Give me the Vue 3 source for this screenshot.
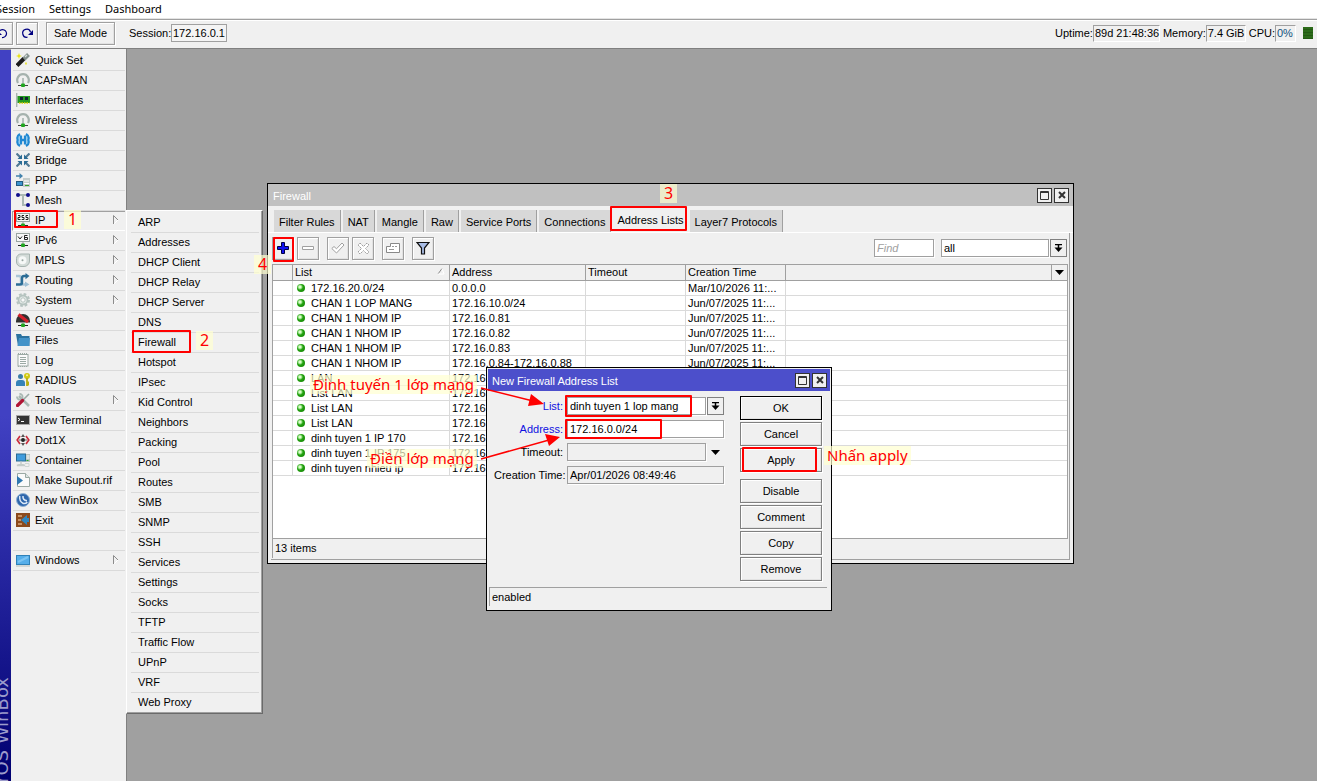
<script setup>
import { ref } from 'vue'

const antenna = '<path d="M2 10C-.2 6 2.500 1.200 7 1.200s7.200 4.800 5 8.800" fill="none" stroke="#a5b2ae" stroke-width="2.200"/><path d="M7 5V11" stroke="#b5c0bc" stroke-width="2"/><path d="M2 12.500h10" stroke="#444" stroke-width="1"/><rect x="5" y="10.500" width="4" height="3.500" rx="1" fill="#1fa51f"/>'
const plug = '<path d="M7 9v3" stroke="#999" stroke-width="1"/><path d="M2 12.500h10" stroke="#222" stroke-width="1"/><rect x="5" y="10.500" width="4" height="3.500" rx="1" fill="#1fa51f"/>'

const icons = {
  quick: '<path d="M1 12.500 8 5.500" stroke="#1c1c1c" stroke-width="4"/><path d="M8 6 12.500 1.500" stroke="#84918d" stroke-width="4"/><path d="M9 4l2-2" stroke="#d5dcda" stroke-width="1.200"/><path d="M3 0l.8 2.200L6 3l-2.200.8L3 6l-.8-2.200L0 3l2.200-.8z" fill="#e8e010"/><path d="M10 9.500v2" stroke="#e8e010" stroke-width="1.500"/>',
  antenna,
  card: '<path d="M.7 0v14" stroke="#a9b5b1" stroke-width="1.400"/><rect x="1.500" y="3" width="12.500" height="7" fill="#239a23"/><rect x="4" y="4" width="3" height="3" fill="#123"/><rect x="9" y="4" width="3" height="3" fill="#123"/><path d="M3 10h10.500" stroke="#e0d000" stroke-width="1.500" stroke-dasharray="1.500 1"/>',
  guard: '<path d="M4 1C1.500 2.500 1 5 1.800 7 1 9 1.500 11.500 4 13M5 2.500v9M10 1c2.500 1.500 3 4 2.200 6 .8 2 .3 4.500-2.200 6M9 2.500v9M4 7h6" fill="none" stroke="#2188d2" stroke-width="2.300"/><path d="M3 3v8M11 3v8" stroke="#55b4ee"/>',
  bridge: '<path d="M.5.500 4.500 4.500M13.500.500 9.500 4.500M.5 13.500l4-4M13.500 13.500l-4-4" stroke="#527a94" stroke-width="2.200"/><path d="M6 1.500V6H1.500zM8 1.500V6h4.500zM6 12.500V8H1.500zM8 12.500V8h4.500z" fill="#2b6c95"/>',
  ppp: '<path d="M0 2.200h3.500V0L7 3 3.500 6V3.800H0z" fill="#4382ac"/><rect x="7" y="5" width="7" height="9" fill="#c5ccca"/><rect x=".5" y="8.500" width="6" height="4" fill="#3d95d0" stroke="#245b80"/><path d="M8 8h5M8 10.500h5" stroke="#fff"/><path d="M9 12.500h4" stroke="#36a52c"/>',
  mesh: '<path d="M2 2h10M7 2v10h5" fill="none" stroke="#abb9b5" stroke-width="2"/><circle cx="2" cy="2" r="2" fill="#10108c"/><circle cx="12" cy="2" r="2" fill="#10108c"/><circle cx="12" cy="12" r="2" fill="#10108c"/>',
  ip: '<rect x=".5" y=".5" width="13" height="8" fill="#f7f7f7" stroke="#9aa5a1"/><path d="M2 2.500h2v2H2v2h2.500M8 2.500H6v2h2v2H5.700M12 2.500h-2v2h2v2H9.700" fill="none" stroke="#222"/>' + plug,
  ipv6: '<rect x=".5" y=".5" width="13" height="8" fill="#f7f7f7" stroke="#9aa5a1"/><path d="M2 3.500l2 2.500 2-2.500M11.500 2.500h-3v4h3v-2h-3" fill="none" stroke="#222"/>' + plug,
  mpls: '<path d="M5 1h8.500v7A5.500 5.500 0 0 1 8 13.500H5A4.500 4.500 0 0 1 .5 9V5.500A4.500 4.500 0 0 1 5 1z" fill="#d3dbd8" stroke="#a7b4b0"/><circle cx="6.500" cy="7.200" r="4" fill="#f6f8f7"/><circle cx="6.500" cy="7.200" r="1" fill="#98a5a1"/>',
  routing: '<path d="M0 3h3q2 0 2 2v4q0 2.500 2 2.500h2" fill="none" stroke="#a9c4d6" stroke-width="2.400"/><path d="M9 8.500 13.500 11.500 9 14z" fill="#9fc0d5"/><path d="M0 11.500h4q2 0 2-2v-4q0-2.500 2-2.500h2" fill="none" stroke="#2b6c95" stroke-width="2.400"/><path d="M9.500 0 13.500 3 9.500 6.200z" fill="#2b6c95"/>',
  gear: '<circle cx="7" cy="7" r="6" fill="none" stroke="#b5c3bf" stroke-width="2" stroke-dasharray="2.700 2"/><circle cx="7" cy="7" r="4.500" fill="#e6ebe9" stroke="#b5c3bf" stroke-width="1.800"/><circle cx="7" cy="7" r="2.200" fill="#fafafa" stroke="#b5c3bf"/>',
  queues: '<path d="M0 8a7 7 0 0 1 14 0v1.500H0z" fill="#303030"/><path d="M2.500 1.500 12 9" stroke="#d3202c" stroke-width="3.200"/>' + plug,
  files: '<path d="M0 1h5l1 2h7.500v10H2z" fill="#2a719f"/><path d="M3 5h11l-1 8H1.500z" fill="#4493c8"/>',
  log: '<rect x="2" y="1.500" width="10" height="11.500" fill="#fbfbfb" stroke="#9ba9a4"/><path d="M4 4.500h6M4 6.500h6M4 8.500h6M4 10.500h6" stroke="#9ba9a4"/><path d="M2 .500h10M2 13.500h10" stroke="#9ba9a4" stroke-dasharray="1 1"/>',
  radius: '<circle cx="4.500" cy="3.500" r="2.500" fill="#3c7ea8"/><path d="M0 13V10q0-3 3-3h3q3 0 3 3v3z" fill="#3583b8"/><circle cx="11" cy="3" r="3" fill="#cfc914"/><path d="M11 5v8M11 9.500h2M11 11.500h2" stroke="#b6ae12" stroke-width="1.800"/><circle cx="11" cy="2.200" r="1" fill="#f5f2a0"/>',
  tools: '<path d="M3 3l10 10" stroke="#aab9b4" stroke-width="2.500"/><path d="M1 3.500A2.800 2.800 0 1 0 3.500 1" fill="none" stroke="#aab9b4" stroke-width="1.800"/><path d="M13 1 7.500 6.500" stroke="#9aaaa5" stroke-width="1.600"/><path d="M6.500 7.500 1.500 12.500" stroke="#b01535" stroke-width="3.200" stroke-linecap="round"/>',
  terminal: '<rect x=".5" y="2.500" width="13" height="9" fill="#333" stroke="#a9a9a9"/><path d="M2 5l2 1.500L2 8M5 8.500h3" fill="none" stroke="#fff"/>',
  dot1x: '<path d="M4 3 1.200 7 4 11M10 3 12.800 7 10 11" fill="none" stroke="#c92d3c" stroke-width="1.700"/><path d="M7 1l2 3H5zM7 13l2-3H5z" fill="#555"/><circle cx="7" cy="7" r="2" fill="#222"/><path d="M3 7h2M9 7h2" stroke="#666"/>',
  container: '<rect x=".5" y="1" width="9" height="7" fill="#3f9bdc" stroke="#2b6c95"/><rect x="10" y="1" width="4" height="8" fill="#b7c2be"/><path d="M10.500 3h3M10.500 5h3" stroke="#fff"/><path d="M10.500 7.500h2" stroke="#2aa52a"/><path d="M5 8.500v3M1 12.500q4-2 8 0z" stroke="#c3ccc9" stroke-width="1.500" fill="#dfe5e3"/><path d="M9 10.500h4v3H9" fill="none" stroke="#cfd6d4"/>',
  supout: '<path d="M1.500.5h8l4 4v9h-12z" fill="#fafafa" stroke="#9ba9a4"/><path d="M9.500.5v4h4" fill="#dde5e2" stroke="#9ba9a4"/><path d="M1 3l6 4.500L1 12z" fill="#2e77b0"/>',
  winbox: '<circle cx="7" cy="7" r="6.500" fill="#2e66ac" stroke="#8fb0d4"/><path d="M3.800 3q-1 5 3.500 7.500 2.500.5 4-1.500M7 3q-.5 4 4 4.800" fill="none" stroke="#dce9f7" stroke-width="1.500"/>',
  exit: '<rect width="14" height="14" fill="#8c4a1c"/><path d="M2 3h4M2 7h3M2 11h4" stroke="#dca97c" stroke-width="1.500"/><path d="M5 7l6-5v3h2v4h-2v3z" fill="#2e86c0"/>',
  windows: '<rect x=".5" y="2.500" width="13" height="9" fill="#55aeea" stroke="#2f81b8"/><path d="M2 9l10-5" stroke="#7cc4f2" stroke-width="2"/><path d="M0 13h14" stroke="#b5bfbc"/>',
}

const mainMenu = [
  ['Quick Set', 'quick'], ['CAPsMAN', 'antenna'], ['Interfaces', 'card'], ['Wireless', 'antenna'],
  ['WireGuard', 'guard'], ['Bridge', 'bridge'], ['PPP', 'ppp'], ['Mesh', 'mesh'],
  ['IP', 'ip', true], ['IPv6', 'ipv6', true], ['MPLS', 'mpls', true], ['Routing', 'routing', true],
  ['System', 'gear', true], ['Queues', 'queues'], ['Files', 'files'], ['Log', 'log'],
  ['RADIUS', 'radius'], ['Tools', 'tools', true], ['New Terminal', 'terminal'], ['Dot1X', 'dot1x'],
  ['Container', 'container'], ['Make Supout.rif', 'supout'], ['New WinBox', 'winbox'], ['Exit', 'exit'],
  ['', ''], ['Windows', 'windows', true],
].map(([label, icon, sub]) => ({ label, icon, sub }))

const ipMenu = ['ARP', 'Addresses', 'DHCP Client', 'DHCP Relay', 'DHCP Server', 'DNS', 'Firewall', 'Hotspot',
  'IPsec', 'Kid Control', 'Neighbors', 'Packing', 'Pool', 'Routes', 'SMB', 'SNMP', 'SSH', 'Services',
  'Settings', 'Socks', 'TFTP', 'Traffic Flow', 'UPnP', 'VRF', 'Web Proxy']

const tabs = ['Filter Rules', 'NAT', 'Mangle', 'Raw', 'Service Ports', 'Connections', 'Address Lists', 'Layer7 Protocols']
const activeTab = ref('Address Lists')

const rows = [
  ['172.16.20.0/24', '0.0.0.0', 'Mar/10/2026 11:...'],
  ['CHAN 1 LOP MANG', '172.16.10.0/24', 'Jun/07/2025 11:...'],
  ['CHAN 1 NHOM IP', '172.16.0.81', 'Jun/07/2025 11:...'],
  ['CHAN 1 NHOM IP', '172.16.0.82', 'Jun/07/2025 11:...'],
  ['CHAN 1 NHOM IP', '172.16.0.83', 'Jun/07/2025 11:...'],
  ['CHAN 1 NHOM IP', '172.16.0.84-172.16.0.88', 'Jun/07/2025 11:...'],
  ['LAN', '172.16', ''],
  ['List LAN', '172.16', ''],
  ['List LAN', '172.16', ''],
  ['List LAN', '172.16', ''],
  ['dinh tuyen 1 IP 170', '172.16', ''],
  ['dinh tuyen 1 IP 175', '172.16', ''],
  ['dinh tuyen nhieu ip', '172.16', ''],
]

const filter = ref('all')
const find = ref('')
const listName = ref('dinh tuyen 1 lop mang')
const address = ref('172.16.0.0/24')
const timeout = ref('')
</script>

<template>
  <div class="app">
    <nav class="menubar">
      <button>Session</button>
      <button>Settings</button>
      <button>Dashboard</button>
    </nav>

    <header class="toolbar">
      <button class="btn sq" aria-label="Undo">
        <svg width="13" height="13" viewBox="0 0 13 13"><path d="M2.500 6.500A4 4 0 1 1 6 10.500" fill="none" stroke="#000080" stroke-width="1.200" /><path d="M1 3v5h5z" fill="#000080" /></svg>
      </button>
      <button class="btn sq" aria-label="Redo">
        <svg width="13" height="13" viewBox="0 0 13 13"><path d="M9.500 5A4 4 0 1 0 6.500 10.200" fill="none" stroke="#000080" stroke-width="1.200" /><path d="M12 3v5H7z" fill="#000080" /></svg>
      </button>
      <button class="btn safe">Safe Mode</button>
      <span class="session-label">Session:</span>
      <output class="boxed">172.16.0.1</output>
      <div class="stats">
        <span>Uptime:</span><output class="sunk up">89d 21:48:36</output>
        <span>Memory:</span><output class="sunk mem">7.4 GiB</output>
        <span>CPU:</span><output class="sunk cpu">0%</output>
        <i class="meter"></i>
      </div>
    </header>

    <main class="body">
      <div class="brand"><span>RouterOS WinBox</span></div>
      <nav class="side">
        <button v-for="(m, i) in mainMenu" :key="i" class="item" :class="{ open: m.label === 'IP' }" :disabled="!m.label">
          <svg v-if="m.icon" width="14" height="14" viewBox="0 0 14 14" v-html="icons[m.icon]"></svg>
          <span>{{ m.label }}</span>
          <svg v-if="m.sub" class="arrow" width="6" height="10" viewBox="0 0 6 10"><path d="M.5 9V.500L5 5" fill="none" stroke="#8c8c8c" /><path d="M5 5 1 9" stroke="#fff" /></svg>
        </button>
      </nav>

      <section class="canvas">
        <nav class="submenu">
          <button v-for="s in ipMenu" :key="s">{{ s }}</button>
        </nav>

        <section class="win firewall">
          <div class="title">
            <h2>Firewall</h2>
            <button class="cap" aria-label="Maximize"><svg width="9" height="9" viewBox="0 0 9 9"><path d="M.5.500h8v8h-8zM0 1.500h9" fill="none" stroke="#333" /></svg></button>
            <button class="cap" aria-label="Close"><svg width="8" height="8" viewBox="0 0 8 8"><path d="M1 1l6 6M7 1 1 7" stroke="#333" stroke-width="2" /></svg></button>
          </div>
          <div class="tabs">
            <button v-for="t in tabs" :key="t" :class="{ active: t === activeTab }" @click="activeTab = t">{{ t }}</button>
          </div>
          <div class="panel">
            <div class="tools">
              <button class="btn sq" aria-label="Add"><svg width="12" height="12" viewBox="0 0 12 12"><path d="M4.500.500h3v4h4v3h-4v4h-3v-4h-4v-3h4z" fill="#1010f0" stroke="#000040" /></svg></button>
              <button class="btn sq" aria-label="Remove"><svg width="14" height="6" viewBox="0 0 14 6"><path d="M1.500 1.500h11v3h-11z" fill="#fff" stroke="#a0a0a0" /></svg></button>
              <button class="btn sq gap" aria-label="Enable"><svg width="14" height="12" viewBox="0 0 14 12"><path d="M.8 6.500 3 4.500l2.500 2.300L11 1l2 2-7.500 8z" fill="#fff" stroke="#a0a0a0" /></svg></button>
              <button class="btn sq" aria-label="Disable"><svg width="13" height="13" viewBox="0 0 13 13"><path d="M3 1l3.500 3.500L10 1l2 2-3.500 3.500L12 10l-2 2-3.500-3.500L3 12l-2-2 3.500-3.500L1 3z" fill="#fff" stroke="#a0a0a0" stroke-dasharray="2 .7" /></svg></button>
              <button class="btn sq gap" aria-label="Comment"><svg width="14" height="12" viewBox="0 0 14 12"><path d="M4.500 1.500h9v9H.5v-6h4z" fill="#fff" stroke="#888" /><path d="M6 4.500h2M9 4.500h2M3 7.500h5" stroke="#999" /></svg></button>
              <button class="btn sq gap" aria-label="Filter"><svg width="14" height="14" viewBox="0 0 14 14"><path d="M1 1.500h12L8.500 7v6h-3V7z" fill="#a9bde6" stroke="#111" stroke-width="1.200" /></svg></button>
              <input v-model="find" class="field find" placeholder="Find" aria-label="Find">
              <div class="combo filter">
                <select v-model="filter" class="field" aria-label="Address list"><option>all</option></select>
                <span class="drop"><svg width="9" height="8" viewBox="0 0 9 8"><path d="M1 .500h7M4.500 1v4" stroke="#000" stroke-width="1.500" /><path d="M.5 3.500h8L4.500 8z" /></svg></span>
              </div>
            </div>
            <div class="grid">
              <table>
                <colgroup><col class="c0"><col class="c1"><col class="c2"><col class="c3"><col class="c3"><col><col class="c6"></colgroup>
                <thead>
                  <tr>
                    <th></th>
                    <th>List<svg class="sort" width="8" height="7" viewBox="0 0 8 7"><path d="M1 6 5 .500" stroke="#888" /><path d="M5 .500 7 6H1" fill="none" stroke="#fff" /></svg></th>
                    <th>Address</th><th>Timeout</th><th>Creation Time</th><th></th>
                    <th><button class="cols" aria-label="Columns"><svg width="9" height="5" viewBox="0 0 9 5"><path d="M0 0h9L4.500 5z" /></svg></button></th>
                  </tr>
                </thead>
                <tbody>
                  <tr v-for="(r, i) in rows" :key="i">
                    <td></td>
                    <td><i class="led"></i>{{ r[0] }}</td>
                    <td>{{ r[1] }}</td><td></td><td>{{ r[2] }}</td><td colspan="2"></td>
                  </tr>
                </tbody>
              </table>
            </div>
            <footer class="count">13 items</footer>
          </div>
        </section>

        <form class="win dialog" @submit.prevent>
          <div class="title">
            <h2>New Firewall Address List</h2>
            <button type="button" class="cap" aria-label="Maximize"><svg width="9" height="9" viewBox="0 0 9 9"><path d="M.5.500h8v8h-8zM0 1.500h9" fill="none" stroke="#333" /></svg></button>
            <button type="button" class="cap" aria-label="Close"><svg width="8" height="8" viewBox="0 0 8 8"><path d="M1 1l6 6M7 1 1 7" stroke="#333" stroke-width="2" /></svg></button>
          </div>
          <div class="content">
            <div class="fields">
              <label class="changed" for="f-list">List:</label>
              <div class="combo"><input id="f-list" v-model="listName" class="field"><button type="button" class="drop" aria-label="Choose list"><svg width="9" height="8" viewBox="0 0 9 8"><path d="M1 .500h7M4.500 1v4" stroke="#000" stroke-width="1.500" /><path d="M.5 3.500h8L4.500 8z" /></svg></button></div>
              <label class="changed" for="f-address">Address:</label>
              <input id="f-address" v-model="address" class="field">
              <label for="f-timeout">Timeout:</label>
              <div class="combo"><input id="f-timeout" v-model="timeout" class="field off"><button type="button" class="drop bare" aria-label="Set timeout"><svg width="9" height="5" viewBox="0 0 9 5"><path d="M0 0h9L4.500 5z" /></svg></button></div>
              <label for="f-created">Creation Time:</label>
              <input id="f-created" class="field off" value="Apr/01/2026 08:49:46" readonly>
            </div>
            <div class="actions">
              <button class="btn default">OK</button>
              <button type="button" class="btn">Cancel</button>
              <button type="button" class="btn">Apply</button>
              <button type="button" class="btn apart">Disable</button>
              <button type="button" class="btn">Comment</button>
              <button type="button" class="btn">Copy</button>
              <button type="button" class="btn">Remove</button>
            </div>
          </div>
          <footer class="state">enabled</footer>
        </form>
      </section>
    </main>

    <div class="marks">
      <i class="frame f-ip"></i>
      <i class="frame f-fw"></i>
      <i class="frame f-tab"></i>
      <i class="frame f-add"></i>
      <i class="frame f-name"></i>
      <i class="frame f-addr"></i>
      <i class="frame f-apply"></i>
      <span class="note num n1">1</span>
      <span class="note num n2">2</span>
      <span class="note num n3">3</span>
      <span class="note num n4">4</span>
      <span class="note n5">Định tuyến 1 lớp mạng</span>
      <span class="note n6">Điền lớp mạng</span>
      <span class="note n7">Nhấn apply</span>
      <svg class="lines" width="90" height="80" viewBox="0 0 90 80">
        <path d="M6 8 56 20.500M6 79 74 60" stroke="#f00" stroke-width="1.500" />
        <path d="M69 24 53 26 56 14zM85 57 74 66 70 54z" fill="#f00" />
      </svg>
    </div>
  </div>
</template>

<style>
body {
  margin: 0;
  background: #a0a0a0;
}
</style>

<style scoped>
.app {
  position: relative;
  display: flex;
  flex-direction: column;
  min-height: 100vh;
  overflow: hidden;
  color: #000;
  font: 11px/15px "Liberation Sans", Arial, sans-serif;
}
.app *,
.app *::before {
  box-sizing: border-box;
}
button,
input,
select {
  margin: 0;
  padding: 0;
  border: 0;
  border-radius: 0;
  background: none;
  color: inherit;
  font: inherit;
  outline: 0;
  white-space: nowrap;
}
svg {
  display: block;
  flex: none;
}

.menubar {
  display: flex;
  gap: 14px;
  height: 18px;
  margin-left: -7px;
  padding-left: 3px;
  background: #fff;
  font: 11px/18px "Noto Sans", sans-serif;
}
.menubar button {
  display: block;
}

.toolbar {
  display: flex;
  align-items: center;
  height: 31px;
  padding-bottom: 1px;
  border-top: 1px solid #e4e4e4;
  border-bottom: 1px solid #808080;
  background: #f0f0f0;
  box-shadow: inset 0 1px #a0a0a0, inset 0 2px #fff;
  white-space: nowrap;
}
.btn {
  display: flex;
  align-items: center;
  justify-content: center;
  height: 23px;
  border: 1px solid #808080;
  background: #f0f0f0;
  box-shadow: inset 1px 1px #fff, inset -1px -1px #e2e2e2, 1px 1px #fff;
}
.btn.sq {
  width: 22px;
  flex: none;
  border-color: #a0a0a0;
}
.toolbar .btn.sq {
  margin-left: 3px;
}
.toolbar .btn.sq:first-child {
  margin-left: -9px;
}
.toolbar .safe {
  width: 69px;
  margin: 0 14px 0 8px;
  border-color: #a0a0a0;
}
.session-label {
  width: 42px;
}
.boxed {
  width: 56px;
  height: 18px;
  border: 1px solid #a0a0a0;
  background: #f4f4f4;
  line-height: 16px;
  text-align: center;
}
.stats {
  display: flex;
  align-items: center;
  margin-left: auto;
  padding-right: 4px;
}
.sunk {
  height: 17px;
  margin-right: 3px;
  padding-left: 1px;
  border: 1px solid #fff;
  border-top-color: #a0a0a0;
  border-left-color: #a0a0a0;
}
.up {
  width: 67px;
}
.mem {
  width: 40px;
}
.cpu {
  width: 21px;
  margin-right: 7px;
  color: #10507c;
}
.meter {
  width: 10px;
  height: 12px;
  background: repeating-linear-gradient(#2c6b1a 0 2px, #245a14 2px 3px);
}

.body {
  display: flex;
  flex: 1;
}
.brand {
  display: flex;
  align-items: flex-end;
  justify-content: flex-end;
  width: 11px;
  margin-top: 1px;
  overflow: hidden;
  background: linear-gradient(#4141c3 0 50%, #000070 100%);
}
.brand span {
  margin-bottom: -54px;
  color: #9c9ccc;
  font: 18px/18px "DejaVu Sans", sans-serif;
  white-space: nowrap;
  writing-mode: vertical-rl;
  transform: rotate(180deg);
}
.side {
  width: 116px;
  padding: 2px 1px 0;
  border-right: 1px solid #808080;
  background: #f0f0f0;
}
.item {
  display: flex;
  align-items: center;
  gap: 5px;
  width: 112px;
  height: 20px;
  margin-left: 1px;
  padding: 0 6px 1px 3px;
  border-bottom: 1px solid #dadada;
}
.item.open {
  width: 113px;
  margin-left: 0;
  border-left: 1px solid #a0a0a0;
  border-bottom-color: #fff;
  box-shadow: inset 0 1px #a0a0a0;
}
.arrow {
  margin-left: auto;
}

.canvas {
  position: relative;
  flex: 1;
  background: #a0a0a0;
}
.submenu {
  position: absolute;
  left: -1px;
  top: 161px;
  width: 137px;
  padding: 2px 3px 0 4px;
  border: 1px solid #6a6a6a;
  border-top-color: #fff;
  border-left-color: #fff;
  background: #f0f0f0;
  box-shadow: inset -1px -1px #a0a0a0;
}
.submenu button {
  display: block;
  width: 100%;
  height: 20px;
  padding-left: 7px;
  border-bottom: 1px solid #dadada;
  text-align: left;
}
.submenu button:last-child {
  border-bottom-color: transparent;
}

.win {
  position: absolute;
  border: 1px solid #000;
  background: #f0f0f0;
}
.firewall {
  left: 140px;
  top: 134px;
  width: 807px;
}
.title {
  display: flex;
  align-items: center;
  gap: 2px;
  height: 22px;
  padding: 0 4px 0 5px;
  background: #c0c0c0;
  color: #fff;
}
.title h2 {
  flex: 1;
  margin: 0;
  padding-top: 3px;
  font: inherit;
}
.cap {
  display: flex;
  align-items: center;
  justify-content: center;
  width: 15px;
  height: 15px;
  border: 1px solid #333;
  background: #f0f0f0;
}
.tabs {
  display: flex;
  align-items: flex-end;
  gap: 2px;
  height: 27px;
  padding: 0 6px;
  border-bottom: 1px solid #fff;
}
.tabs button {
  height: 22px;
  padding: 2px 5px 0;
  border-right: 1px solid #a0a0a0;
  background: #d8d8d8;
}
.tabs .active {
  height: 26px;
  padding: 2px 4px 0;
  border: 0;
  background: #f0f0f0;
}
.panel {
  margin: 0 3px 3px;
  border-right: 1px solid #a0a0a0;
  border-bottom: 1px solid #a0a0a0;
  padding-bottom: 1px;
}
.tools {
  display: flex;
  align-items: center;
  gap: 3px;
  height: 31px;
  padding: 0 2px 1px 1px;
}
.tools .gap {
  margin-left: 5px;
}
.field {
  width: 100%;
  height: 18px;
  min-width: 0;
  padding: 0 2px;
  border: 1px solid #a0a0a0;
  background: #fff;
  box-shadow: 1px 1px #fff;
  line-height: 15px;
}
select.field {
  appearance: none;
}
.field.off {
  background: #f0f0f0;
}
.find {
  width: 60px;
  margin-left: auto;
  font-style: italic;
}
.find::placeholder {
  color: #a0a0a0;
  opacity: 1;
}
.combo {
  display: flex;
  gap: 1px;
}
.combo.filter {
  width: 126px;
  margin-left: 4px;
}
.drop {
  display: flex;
  align-items: center;
  justify-content: center;
  flex: none;
  width: 17px;
  height: 18px;
  border: 1px solid #808080;
  background: #f0f0f0;
}
.drop.bare {
  border-color: transparent;
}
.grid {
  min-height: 275px;
  margin: 0 1px;
  border: 1px solid #a0a0a0;
  background: #fff;
}
table {
  width: 100%;
  border-collapse: separate;
  border-spacing: 0;
  table-layout: fixed;
}
.c0 { width: 20px; }
.c1 { width: 157px; }
.c2 { width: 136px; }
.c3 { width: 100px; }
.c6 { width: 15px; }
th {
  position: relative;
  height: 16px;
  padding: 0 2px;
  border-right: 1px solid #a0a0a0;
  border-bottom: 1px solid #a0a0a0;
  background: #f0f0f0;
  font-weight: 400;
  line-height: 15px;
  text-align: left;
}
th:last-child {
  padding: 0;
  border-right: 0;
}
.sort {
  position: absolute;
  top: 3px;
  right: 4px;
}
.cols {
  display: flex;
  align-items: center;
  justify-content: center;
  width: 100%;
  height: 15px;
}
td {
  height: 15px;
  padding: 0 2px;
  border-right: 1px solid #dadada;
  border-bottom: 1px solid #dadada;
  line-height: 14px;
  white-space: nowrap;
}
td:last-child {
  border-right: 0;
}
.led {
  display: inline-block;
  width: 8px;
  height: 8px;
  margin: 0 6px 0 2px;
  border-radius: 50%;
  background: radial-gradient(circle at 3px 3px, #d8ffc8 0 1px, #23a310 3px, #117a04);
}
.count {
  height: 19px;
  padding: 2px 2px;
  margin: 0 1px;
  border-left: 1px solid #a0a0a0;
}

.dialog {
  left: 359px;
  top: 318px;
  width: 346px;
  padding: 1px;
}
.dialog .title {
  padding: 0 3px 0 4px;
  background: #4c4fcb;
}
.content {
  display: flex;
  gap: 16px;
  padding: 5px 8px 6px 6px;
}
.fields {
  display: grid;
  grid-template-columns: 69px 1fr;
  grid-auto-rows: 18px;
  gap: 5px 4px;
  align-content: start;
  flex: 1;
  padding-top: 1px;
}
.fields label {
  line-height: 18px;
  text-align: right;
  white-space: nowrap;
}
.changed {
  color: #1010e0;
}
.actions {
  display: flex;
  flex-direction: column;
  gap: 2px;
  width: 82px;
}
.actions .btn {
  height: 24px;
}
.actions .default {
  border-color: #000;
}
.actions .apart {
  margin-top: 5px;
}
.state {
  height: 19px;
  margin: 0 3px 3px 1px;
  padding: 2px 2px;
  border-top: 1px solid #a0a0a0;
  border-left: 1px solid #a0a0a0;
}

.marks {
  position: absolute;
  inset: 0;
  pointer-events: none;
}
.marks > * {
  position: absolute;
}
.frame {
  border: 2px solid #f00;
  border-radius: 1px;
}
.f-ip { left: 14px; top: 210px; width: 44px; height: 18px; }
.f-fw { left: 132px; top: 330px; width: 59px; height: 23px; }
.f-tab { left: 610px; top: 206px; width: 77px; height: 25px; }
.f-add { left: 273px; top: 237px; width: 21px; height: 25px; }
.f-name { left: 565px; top: 395px; width: 127px; height: 22px; }
.f-addr { left: 565px; top: 419px; width: 97px; height: 20px; }
.f-apply { left: 742px; top: 447px; width: 75px; height: 25px; }
.note {
  height: 19px;
  padding: 0 3px;
  background: rgba(255, 255, 208, 0.7);
  color: #f00;
  font: 15px/19px "Noto Sans", sans-serif;
  white-space: nowrap;
}
.num {
  width: 17px;
  padding: 0;
  font-size: 16px;
  text-align: center;
}
.n1 { left: 64px; top: 210px; }
.n2 { left: 196px; top: 331px; }
.n3 { left: 660px; top: 184px; }
.n4 { left: 254px; top: 255px; }
.n5 { left: 310px; top: 375px; }
.n6 { left: 367px; top: 449px; }
.n7 { left: 824px; top: 446px; }
.lines {
  left: 475px;
  top: 380px;
}
</style>
